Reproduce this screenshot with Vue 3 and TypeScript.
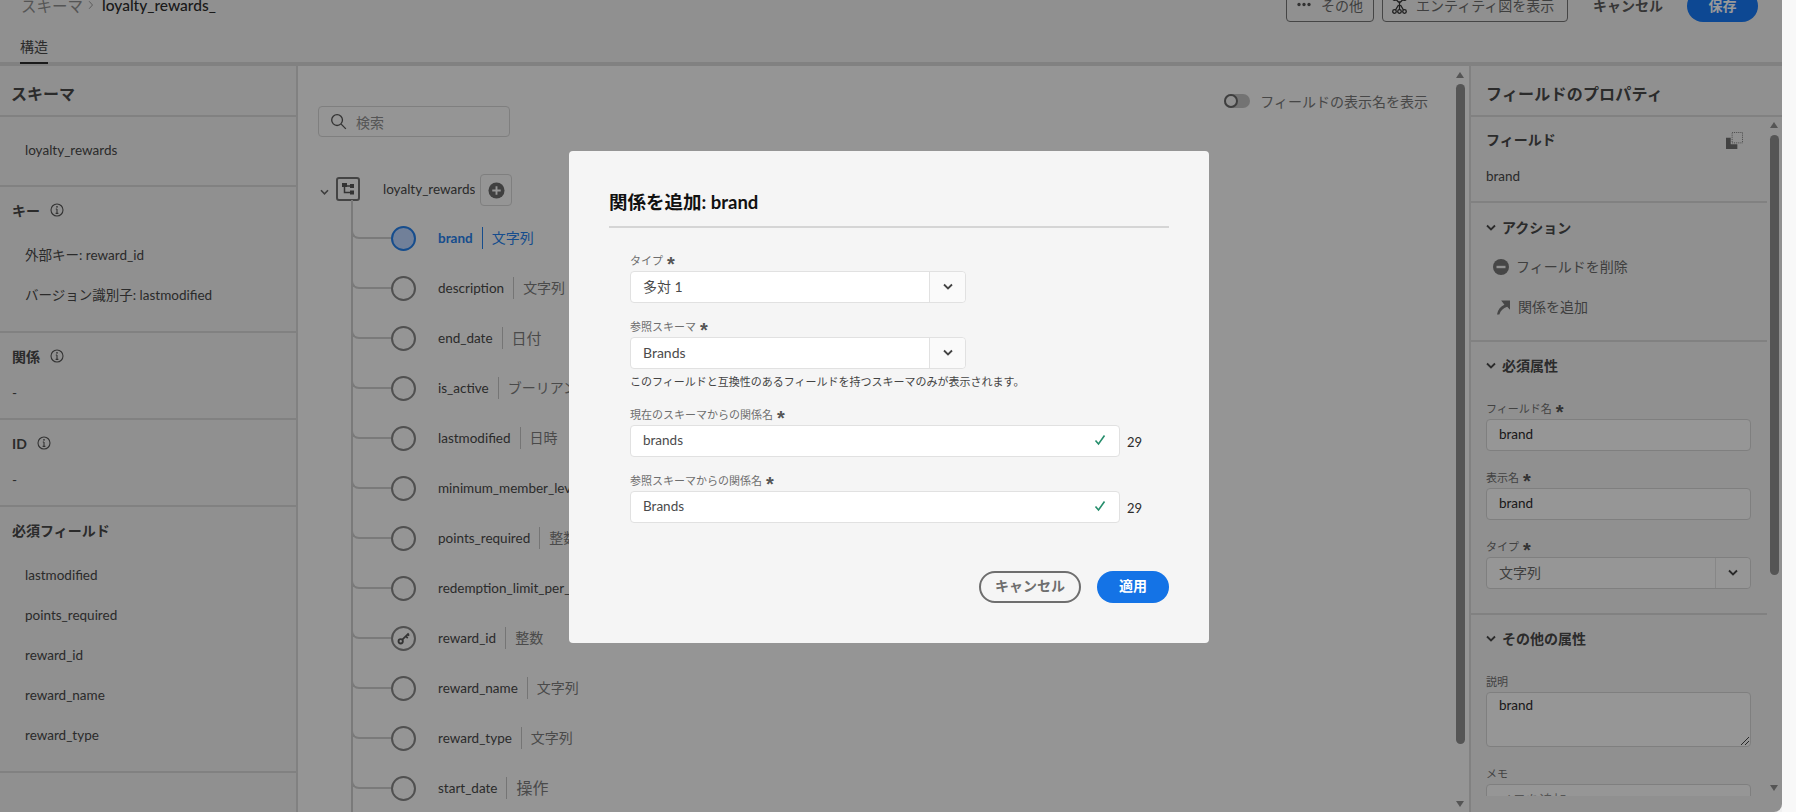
<script setup lang="ts">
interface TreeField {
  name: string;
  type: string;
  size?: number;
  selected?: boolean;
  key?: boolean;
}

const fields: TreeField[] = [
  { name: "brand", type: "文字列", selected: true },
  { name: "description", type: "文字列" },
  { name: "end_date", type: "日付", size: 15 },
  { name: "is_active", type: "ブーリアン" },
  { name: "lastmodified", type: "日時" },
  { name: "minimum_member_level", type: "整数" },
  { name: "points_required", type: "整数" },
  { name: "redemption_limit_per_member", type: "整数" },
  { name: "reward_id", type: "整数", key: true },
  { name: "reward_name", type: "文字列" },
  { name: "reward_type", type: "文字列" },
  { name: "start_date", type: "操作", size: 16 },
];

const required = [
  "lastmodified",
  "points_required",
  "reward_id",
  "reward_name",
  "reward_type",
];
</script>

<template>
  <div class="page">
    <header class="head">
      <div class="topbar">
        <div class="crumb">
          <span class="crumb-root">スキーマ</span>
          <svg class="crumb-sep" viewBox="0 0 8 12" width="6" height="10">
            <path d="M1.5 1l4.5 5-4.5 5" fill="none" stroke="currentColor" stroke-width="1.2" />
          </svg>
          <strong>loyalty_rewards_</strong>
        </div>
        <div class="actions">
          <button class="ghost more">
            <svg viewBox="0 0 18 6" width="16" height="5"><circle cx="3" cy="3" r="2" /><circle cx="9" cy="3" r="2" /><circle cx="15" cy="3" r="2" /></svg>
            その他
          </button>
          <button class="ghost entity">
            <svg viewBox="0 0 15 18" width="15" height="18" fill="none" stroke="currentColor" stroke-width="1.3">
              <circle cx="2.5" cy="2.5" r="1.8" /><circle cx="12.5" cy="2.5" r="1.8" />
              <circle cx="2.5" cy="15.5" r="1.8" /><circle cx="7.5" cy="15.5" r="1.8" /><circle cx="12.5" cy="15.5" r="1.8" />
              <path d="M4 3.5l2.5 2.5h2L11 3.5M7.5 6v7.700M6.5 9L3.500 14M8.500 9l3 5" />
            </svg>
            エンティティ図を表示
          </button>
          <span class="quiet">キャンセル</span>
          <button class="save">保存</button>
        </div>
      </div>
      <div class="tabs"><span class="tab">構造</span></div>
    </header>

    <div class="body">
      <aside class="left">
        <h2 class="panel-title">スキーマ</h2>
        <section class="block first">
          <p class="item">loyalty_rewards</p>
        </section>
        <section class="block keys">
          <h3 class="block-title">
            キー
            <svg class="info" viewBox="0 0 14 14" width="14" height="14"><circle cx="7" cy="7" r="6" /><path d="M7 6v4.2M5.6 10.4h2.8M5.8 6h1.2" /><circle class="dot" cx="7" cy="3.8" r=".9" /></svg>
          </h3>
          <p class="item">外部キー: reward_id</p>
          <p class="item">バージョン識別子: lastmodified</p>
        </section>
        <section class="block short">
          <h3 class="block-title">
            関係
            <svg class="info" viewBox="0 0 14 14" width="14" height="14"><circle cx="7" cy="7" r="6" /><path d="M7 6v4.2M5.6 10.4h2.8M5.8 6h1.2" /><circle class="dot" cx="7" cy="3.8" r=".9" /></svg>
          </h3>
          <p class="dash">-</p>
        </section>
        <section class="block short">
          <h3 class="block-title">
            ID
            <svg class="info" viewBox="0 0 14 14" width="14" height="14"><circle cx="7" cy="7" r="6" /><path d="M7 6v4.2M5.6 10.4h2.8M5.8 6h1.2" /><circle class="dot" cx="7" cy="3.8" r=".9" /></svg>
          </h3>
          <p class="dash">-</p>
        </section>
        <section class="block req">
          <h3 class="block-title">必須フィールド</h3>
          <p v-for="name in required" :key="name" class="item">{{ name }}</p>
        </section>
      </aside>

      <main class="center">
        <div class="center-scroll">
          <div class="center-top">
            <label class="search">
              <svg viewBox="0 0 18 18" width="17" height="17" fill="none" stroke="currentColor" stroke-width="1.4"><circle cx="7.5" cy="7.5" r="5.7" /><path d="M11.8 11.8l5 5" /></svg>
              <span>検索</span>
            </label>
            <div class="toggle-row">
              <span class="toggle"><i /></span>
              <span>フィールドの表示名を表示</span>
            </div>
          </div>

          <div class="root-row">
            <svg class="chev" viewBox="0 0 10 8" width="9" height="7"><path d="M1 1.5l4 4 4-4" fill="none" stroke="currentColor" stroke-width="1.8" /></svg>
            <span class="root-box">
              <svg viewBox="0 0 14 14" width="14" height="14">
                <path d="M3.5 3v7.5H9M3.5 4H9" fill="none" stroke="#555" stroke-width="1.5" />
                <rect x="1" y="1" width="5" height="4" />
                <rect x="9" y="2" width="4" height="4" />
                <rect x="9" y="8.5" width="4" height="4" />
              </svg>
            </span>
            <span class="root-name">loyalty_rewards_</span>
            <span class="add">
              <svg viewBox="0 0 18 18" width="17" height="17"><circle cx="9" cy="9" r="8.5" /><path d="M9 4.5v9M4.5 9h9" stroke="#f8f8f8" stroke-width="2" /></svg>
            </span>
          </div>

          <ul class="tree">
            <li v-for="f in fields" :key="f.name" class="node" :class="{ selected: f.selected }">
              <span class="branch" />
              <span class="ring">
                <svg v-if="f.key" viewBox="0 0 16 16" width="15" height="15" fill="none" stroke="#555">
                  <circle cx="5" cy="11" r="2.3" stroke-width="2" />
                  <path d="M7 9l6.5-6.5M10.5 5.500l2 2M12.5 3.500l1.500 1.500" stroke-width="1.8" />
                </svg>
              </span>
              <span class="node-name">{{ f.name }}</span>
              <span class="node-type" :style="f.size ? { fontSize: f.size + 'px' } : undefined">{{ f.type }}</span>
            </li>
          </ul>
        </div>
        <div class="scrollbar main-bar"><b class="up" /><i /><b class="down" /></div>
      </main>

      <aside class="right">
        <h2 class="panel-title">フィールドのプロパティ</h2>
        <div class="right-body">
          <div class="right-scroll">
            <section class="prop field-info">
              <h3 class="prop-title">フィールド</h3>
              <p class="prop-value">brand</p>
              <svg class="copy" viewBox="0 0 18 18" width="17" height="17">
                <rect x="6.5" y=".5" width="11" height="11" fill="none" stroke="#777" stroke-dasharray="1 1" />
                <path d="M0 6h5v7h7v5H0z" />
              </svg>
            </section>
            <section class="prop action-block">
              <h3 class="prop-title fold"><svg viewBox="0 0 10 8" width="10" height="8"><path d="M1 1.5l4 4 4-4" fill="none" stroke="currentColor" stroke-width="1.8" /></svg>アクション</h3>
              <p class="act del"><svg viewBox="0 0 16 16" width="16" height="16"><circle cx="8" cy="8" r="8" /><rect x="3.5" y="6.8" width="9" height="2.4" fill="#f0f0f0" /></svg>フィールドを削除</p>
              <p class="act rel"><svg viewBox="0 0 14 16" width="13" height="16"><path d="M4.5 1H14v10l-3-3.200C6.500 9.500 4 12 2.500 16H0c1-5.500 4-9 8-10.500z" /></svg>関係を追加</p>
            </section>
            <section class="prop req-block">
              <h3 class="prop-title fold"><svg viewBox="0 0 10 8" width="10" height="8"><path d="M1 1.5l4 4 4-4" fill="none" stroke="currentColor" stroke-width="1.8" /></svg>必須属性</h3>
              <div class="field">
                <label class="lbl">フィールド名<em>*</em></label>
                <div class="box">brand</div>
              </div>
              <div class="field">
                <label class="lbl">表示名<em>*</em></label>
                <div class="box">brand</div>
              </div>
              <div class="field">
                <label class="lbl">タイプ<em>*</em></label>
                <div class="box select">
                  <span class="sel-value">文字列</span>
                  <span class="sel-btn"><svg viewBox="0 0 10 8" width="10" height="8"><path d="M1 1.5l4 4 4-4" fill="none" stroke="currentColor" stroke-width="1.8" /></svg></span>
                </div>
              </div>
            </section>
            <section class="prop other-block">
              <h3 class="prop-title fold"><svg viewBox="0 0 10 8" width="10" height="8"><path d="M1 1.5l4 4 4-4" fill="none" stroke="currentColor" stroke-width="1.8" /></svg>その他の属性</h3>
              <div class="field">
                <label class="lbl">説明</label>
                <div class="box area">
                  brand
                  <svg class="grip" viewBox="0 0 8 8" width="8" height="8"><path d="M0 8l8-8M4 8l4-4" stroke="#444" fill="none" /></svg>
                </div>
              </div>
              <div class="field memo">
                <label class="lbl">メモ</label>
                <div class="box placeholder">メモを追加</div>
              </div>
            </section>
          </div>
          <div class="scrollbar side-bar"><b class="up" /><i /><b class="down" /></div>
        </div>
      </aside>
    </div>
  </div>

  <div class="overlay">
    <div class="dialog">
      <h1 class="dlg-title">関係を追加: brand</h1>
      <form class="dlg-form" @submit.prevent>
        <div class="dlg-field">
          <label class="lbl">タイプ<em>*</em></label>
          <div class="dlg-row">
            <div class="box select short-box">
              <span class="sel-value">多対 1</span>
              <span class="sel-btn"><svg viewBox="0 0 10 8" width="10" height="8"><path d="M1 1.5l4 4 4-4" fill="none" stroke="currentColor" stroke-width="1.8" /></svg></span>
            </div>
          </div>
        </div>
        <div class="dlg-field">
          <label class="lbl">参照スキーマ<em>*</em></label>
          <div class="dlg-row">
            <div class="box select short-box">
              <span class="sel-value">Brands</span>
              <span class="sel-btn"><svg viewBox="0 0 10 8" width="10" height="8"><path d="M1 1.5l4 4 4-4" fill="none" stroke="currentColor" stroke-width="1.8" /></svg></span>
            </div>
          </div>
          <p class="help">このフィールドと互換性のあるフィールドを持つスキーマのみが表示されます。</p>
        </div>
        <div class="dlg-field">
          <label class="lbl">現在のスキーマからの関係名<em>*</em></label>
          <div class="dlg-row">
            <div class="box long-box">
              brands
              <svg class="tick" viewBox="0 0 12 12" width="12" height="12"><path d="M1.5 6.5l3 3.5 6-8.5" fill="none" stroke="currentColor" stroke-width="1.6" /></svg>
            </div>
            <span class="count">29</span>
          </div>
        </div>
        <div class="dlg-field">
          <label class="lbl">参照スキーマからの関係名<em>*</em></label>
          <div class="dlg-row">
            <div class="box long-box">
              Brands
              <svg class="tick" viewBox="0 0 12 12" width="12" height="12"><path d="M1.5 6.5l3 3.5 6-8.5" fill="none" stroke="currentColor" stroke-width="1.6" /></svg>
            </div>
            <span class="count">29</span>
          </div>
        </div>
      </form>
      <div class="dlg-foot">
        <button class="btn-outline">キャンセル</button>
        <button class="btn-primary">適用</button>
      </div>
    </div>
  </div>
</template>

<style>
html,
body {
  margin: 0;
  height: 812px;
  overflow: hidden;
  background: #f8f8f8;
}
</style>

<style scoped>
* {
  box-sizing: border-box;
}
p,
h1,
h2,
h3,
ul {
  margin: 0;
  padding: 0;
}
.page {
  width: 1782px;
  height: 812px;
  overflow: hidden;
  background: #f8f8f8;
  color: #484848;
  font-family: Lato, "Noto Sans CJK JP", sans-serif;
  font-size: 13.5px;
}
.head {
  display: flex;
  flex-direction: column;
  height: 66px;
  border-bottom: 4px solid #d8d8d8;
  background: #f0f0f0;
}
.topbar {
  display: flex;
  justify-content: space-between;
  flex: none;
  height: 32px;
  margin-top: -10px;
  padding: 0 24px 0 21px;
}
.crumb {
  display: flex;
  align-items: center;
  gap: 5px;
  height: 29px;
  font-size: 15.5px;
}
.crumb-root,
.crumb-sep {
  color: #8e8e8e;
}
.crumb strong {
  font-weight: 500;
  margin-left: 3px;
  color: #2c2c2c;
}
.actions {
  display: flex;
  align-items: center;
  height: 32px;
  font-size: 14px;
}
.ghost {
  display: flex;
  align-items: center;
  gap: 9px;
  height: 32px;
  border: 1px solid #747474;
  border-radius: 4px;
  background: none;
  color: #6a6a6a;
  font: inherit;
  padding: 0 9px 3px;
  overflow: hidden;
}
.more {
  width: 88px;
}
.more svg {
  fill: #555;
}
.entity {
  width: 186px;
  margin-left: 8px;
}
.entity svg {
  color: #333;
  flex: none;
}
.quiet {
  margin-left: 25px;
  padding-bottom: 3px;
  width: 94px;
  font-weight: 700;
  color: #5a5a5a;
}
.save {
  width: 71px;
  height: 32px;
  padding: 0 0 3px;
  border: 0;
  border-radius: 16px;
  background: #1679f5;
  color: #fff;
  font: inherit;
  font-weight: 700;
}
.tabs {
  flex: none;
  height: 40px;
  padding: 14px 0 0 20px;
}
.tab {
  display: inline-block;
  height: 28px;
  line-height: 22px;
  border-bottom: 2px solid #2c2c2c;
  font-size: 14px;
}
.body {
  display: flex;
  height: 746px;
}
.left {
  width: 298px;
  flex: none;
  background: #f0f0f0;
  border-right: 2px solid #d8d8d8;
}
.panel-title {
  height: 51px;
  padding: 18px 0 0 11px;
  line-height: 20px;
  font-size: 16px;
  font-weight: 700;
  border-bottom: 2px solid #d8d8d8;
}
.block {
  border-bottom: 2px solid #d8d8d8;
  padding-left: 12px;
}
.block-title {
  display: flex;
  align-items: center;
  gap: 10px;
  font-size: 14px;
  font-weight: 700;
  height: 20px;
}
.info {
  fill: none;
  stroke: #555;
  stroke-width: 1.1;
}
.info .dot {
  fill: #555;
  stroke: none;
}
.item {
  padding-left: 13px;
  height: 40px;
  line-height: 40px;
  white-space: nowrap;
}
.first {
  height: 70px;
  padding-top: 13px;
}
.keys {
  height: 146px;
  padding-top: 13px;
}
.keys .block-title,
.req .block-title {
  margin-bottom: 15px;
}
.short {
  height: 87px;
  padding-top: 13px;
}
.dash {
  margin-top: 17px;
  line-height: 20px;
}
.req {
  height: 266px;
  padding-top: 13px;
}
.center {
  flex: 1;
  display: flex;
  min-width: 0;
  border-right: 2px solid #d8d8d8;
  background: #f8f8f8;
}
.center-scroll {
  flex: 1;
  height: 746px;
  overflow: hidden;
}
.center-top {
  display: flex;
  justify-content: space-between;
  height: 108px;
  padding: 40px 28px 0 20px;
}
.search {
  display: flex;
  align-items: center;
  gap: 9px;
  width: 192px;
  height: 31px;
  padding: 0 11px;
  border: 1px solid #d4d4d4;
  border-radius: 4px;
  color: #8e8e8e;
  font-size: 14px;
}
.search svg {
  color: #555;
}
.toggle-row {
  display: flex;
  align-items: center;
  gap: 10px;
  height: 20px;
  margin-top: -15px;
  color: #777;
  font-size: 14px;
}
.toggle {
  position: relative;
  width: 26px;
  height: 14px;
  border-radius: 7px;
  background: #c0c0c0;
}
.toggle i {
  position: absolute;
  left: 0;
  top: 0;
  width: 14px;
  height: 14px;
  border-radius: 50%;
  border: 2px solid #686868;
  background: #f0f0f0;
}
.root-row {
  display: flex;
  align-items: center;
  height: 32px;
  padding-left: 22px;
}
.chev {
  color: #666;
  margin-top: 4px;
  flex: none;
}
.root-box {
  display: flex;
  align-items: center;
  justify-content: center;
  width: 24px;
  height: 24px;
  margin: -2px 0 0 7px;
  border: 2px solid #727272;
  border-radius: 3px;
  fill: #555;
}
.root-name {
  margin: -3px 5px 0 23px;
  width: 92px;
  overflow: hidden;
  white-space: nowrap;
}
.add {
  display: flex;
  align-items: center;
  justify-content: center;
  width: 32px;
  height: 32px;
  border: 1px solid #d4d4d4;
  border-radius: 4px;
  fill: #6b6b6b;
}
.tree {
  position: relative;
  list-style: none;
  margin-left: 53px;
  border-left: 2px solid #ccc;
  margin-top: -6px;
  padding-top: 13px;
}
.node {
  position: relative;
  display: flex;
  align-items: center;
  height: 50px;
  padding-left: 37px;
  margin-left: -2px;
}
.branch {
  width: 40px;
  height: 27px;
  margin-top: -25px;
  flex: none;
  margin-left: -37px;
  border-left: 2px solid #ccc;
  border-bottom: 2px solid #ccc;
  border-bottom-left-radius: 8px;
}
.ring {
  display: flex;
  align-items: center;
  justify-content: center;
  width: 25px;
  height: 25px;
  flex: none;
  border: 2px solid #858585;
  border-radius: 50%;
}
.node-name {
  margin-left: 22px;
  white-space: nowrap;
  padding-right: 9px;
  border-right: 1px solid #c4c4c4;
  line-height: 22px;
}
.node-type {
  margin-left: 9px;
  font-size: 14px;
  color: #7c7c7c;
  white-space: nowrap;
  line-height: 22px;
}
.selected .ring {
  border-color: #2680eb;
  background: #bcd6ff;
}
.selected .node-name {
  color: #2680eb;
  font-weight: 700;
  border-right-color: #2680eb;
}
.selected .node-type {
  color: #2680eb;
}
.scrollbar {
  position: relative;
  flex: none;
  width: 9px;
}
.scrollbar i {
  position: absolute;
  left: 0;
  width: 9px;
  border-radius: 5px;
  background: #8e8e8e;
}
.scrollbar b {
  position: absolute;
  left: 0;
  width: 0;
  height: 0;
  border-left: 4.5px solid transparent;
  border-right: 4.5px solid transparent;
}
.scrollbar .up {
  border-bottom: 6px solid #8e8e8e;
}
.scrollbar .down {
  border-top: 6px solid #8e8e8e;
}
.main-bar {
  margin-right: 4px;
}
.main-bar i {
  top: 18px;
  height: 660px;
}
.main-bar .up {
  top: 6px;
}
.main-bar .down {
  top: 735px;
}
.right {
  flex: none;
  width: 311px;
  background: #f0f0f0;
  display: flex;
  flex-direction: column;
}
.right .panel-title {
  padding-left: 15px;
  letter-spacing: 0.2px;
}
.right-body {
  display: flex;
  height: 695px;
  background: #f0f0f0;
  padding-right: 3px;
}
.right-scroll {
  width: 296px;
  height: 679px;
  flex: none;
  overflow: hidden;
  margin-right: 3px;
}
.side-bar i {
  top: 18px;
  height: 440px;
}
.side-bar .up {
  top: 5px;
}
.side-bar .down {
  top: 668px;
}
.prop {
  position: relative;
  padding: 0 15px;
  border-bottom: 2px solid #d8d8d8;
}
.prop-title {
  font-size: 14px;
  font-weight: 700;
  line-height: 20px;
}
.fold {
  display: flex;
  align-items: center;
  gap: 6px;
}
.fold svg {
  flex: none;
}
.field-info {
  height: 86px;
  padding-top: 13px;
}
.prop-value {
  margin-top: 16px;
  line-height: 20px;
}
.copy {
  position: absolute;
  right: 24px;
  top: 15px;
  fill: #6e6e6e;
}
.action-block {
  height: 139px;
  padding-top: 15px;
}
.act {
  display: flex;
  align-items: center;
  line-height: 20px;
  color: #6a6a6a;
  font-size: 14px;
  white-space: nowrap;
}
.act svg {
  fill: #757575;
}
.del {
  margin-top: 19px;
  gap: 7px;
  padding-left: 7px;
}
.rel {
  margin-top: 20px;
  gap: 8px;
  padding-left: 11px;
}
.req-block {
  height: 273px;
  padding-top: 14px;
}
.lbl {
  display: block;
  height: 16px;
  line-height: 16px;
  font-size: 11px;
  color: #6e6e6e;
  white-space: nowrap;
}
.lbl em {
  font-family: "Liberation Sans", sans-serif;
  font-style: normal;
  font-weight: 700;
  font-size: 20px;
  color: #555;
  margin-left: 4px;
  line-height: 12px;
  vertical-align: -6px;
}
.field {
  margin-top: 19px;
}
.req-block .field:first-of-type {
  margin-top: 25px;
}
.box {
  position: relative;
  display: flex;
  align-items: center;
  width: 100%;
  height: 32px;
  margin-top: 2px;
  padding: 0 0 2px 12px;
  background: #fff;
  border: 1px solid #e1e1e1;
  border-radius: 4px;
  color: #4b4b4b;
  font-size: 13.5px;
  white-space: nowrap;
}
.right .box {
  background: #fafafa;
  border-color: #d4d4d4;
  color: #2c2c2c;
  width: 265px;
}
.right .select .sel-btn {
  width: 35px;
}
.right .sel-value {
  color: #6a6a6a;
}
.select {
  padding: 0;
}
.sel-value {
  flex: 1;
  padding: 0 0 2px 12px;
  font-size: 14px;
}
.sel-btn {
  display: flex;
  align-items: center;
  justify-content: center;
  align-self: stretch;
  width: 36px;
  background: #fafafa;
  border-left: 1px solid #e1e1e1;
  border-radius: 0 4px 4px 0;
  color: #444;
}
.other-block {
  padding-top: 14px;
  border-bottom: 0;
}
.other-block .field:first-of-type {
  margin-top: 25px;
}
.area {
  align-items: flex-start;
  height: 55px;
  padding-top: 4px;
}
.grip {
  position: absolute;
  right: 1px;
  bottom: 1px;
}
.memo {
  margin-top: 19px;
}
.right .placeholder {
  color: #8e8e8e;
}

.overlay {
  position: fixed;
  top: 0;
  left: 0;
  width: 1782px;
  height: 812px;
  background: rgba(0, 0, 0, 0.4);
  border-bottom-right-radius: 8px;
  font-family: Lato, "Noto Sans CJK JP", sans-serif;
}
.dialog {
  position: absolute;
  left: 569px;
  top: 151px;
  width: 640px;
  height: 492px;
  padding: 0 40px;
  background: #f5f5f5;
  border-radius: 4px;
  color: #2c2c2c;
}
.dlg-title {
  height: 77px;
  padding-top: 37px;
  font-size: 18.5px;
  font-weight: 700;
  line-height: 28px;
  color: #111;
  border-bottom: 2px solid #d5d5d5;
}
.dlg-form {
  padding: 25px 0 0 21px;
}
.dlg-field {
  margin-bottom: 16px;
}
.dlg-row {
  display: flex;
  align-items: center;
}
.short-box {
  width: 336px;
}
.long-box {
  width: 490px;
}
.tick {
  position: absolute;
  right: 13px;
  top: 8px;
  color: #268e6c;
}
.count {
  margin-left: 7px;
  margin-top: 3px;
  font-size: 13px;
}
.help {
  margin-top: 5px;
  font-size: 11px;
  line-height: 16px;
  color: #444;
  white-space: nowrap;
}
.dlg-field:nth-child(2) {
  margin-bottom: 17px;
}
.dlg-foot {
  position: absolute;
  right: 40px;
  top: 420px;
  display: flex;
  gap: 16px;
}
.btn-outline,
.btn-primary {
  height: 32px;
  padding: 0 0 5px;
  border-radius: 16px;
  font: inherit;
  font-size: 14px;
  font-weight: 700;
}
.btn-outline {
  width: 102px;
  background: none;
  border: 2px solid #6e6e6e;
  color: #6e6e6e;
}
.btn-primary {
  width: 72px;
  border: 0;
  background: #1473e6;
  color: #fff;
}
</style>
